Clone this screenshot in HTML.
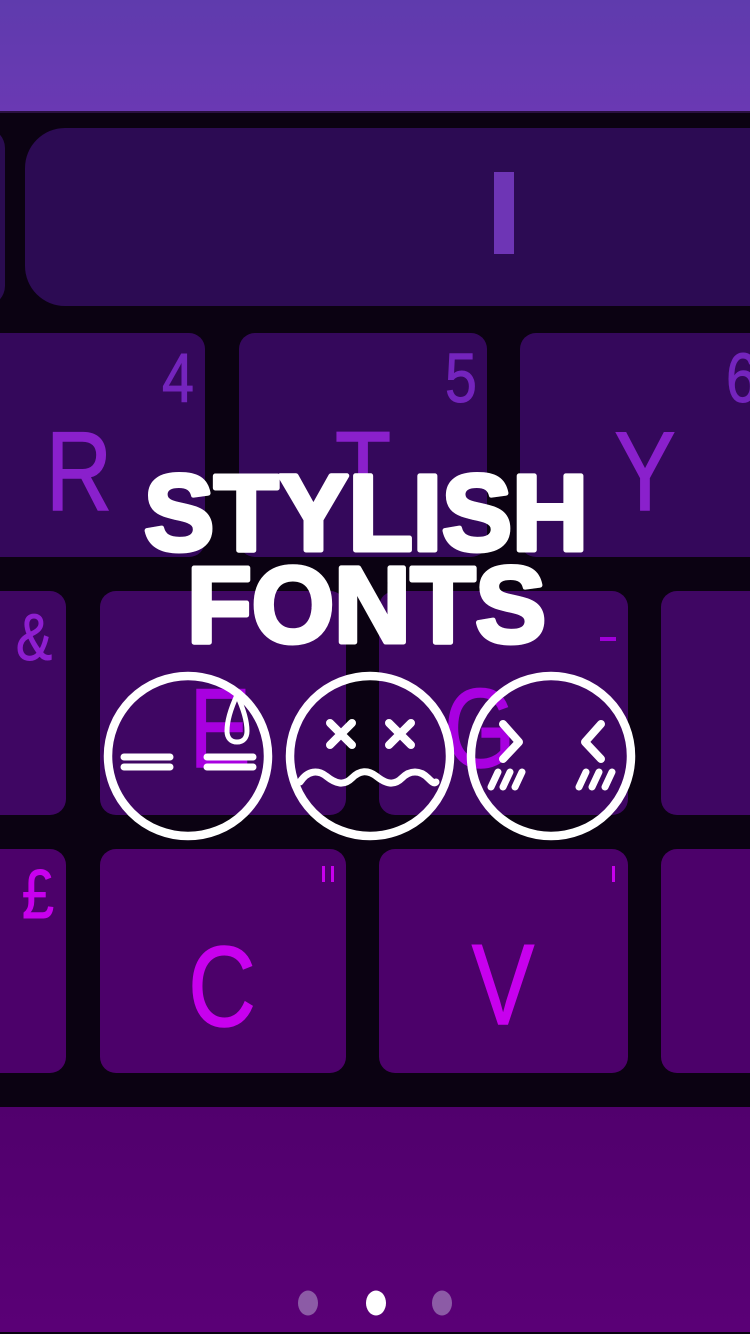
<!DOCTYPE html>
<html><head><meta charset="utf-8"><style>
html,body{margin:0;padding:0;background:#0b0212;width:750px;height:1334px;overflow:hidden}
svg{display:block}
</style></head><body>
<svg width="750" height="1334" viewBox="0 0 750 1334" xmlns="http://www.w3.org/2000/svg" font-family="Liberation Sans, sans-serif">
<defs>
<linearGradient id="top" x1="0" y1="0" x2="0" y2="1"><stop offset="0" stop-color="#5f3bad"/><stop offset="1" stop-color="#6a39b3"/></linearGradient>
<linearGradient id="bot" x1="0" y1="0" x2="0" y2="1"><stop offset="0" stop-color="#51006d"/><stop offset="1" stop-color="#5a0076"/></linearGradient>
</defs>
<rect width="750" height="1334" fill="#0b0212"/>
<rect width="750" height="111" fill="url(#top)"/>
<rect x="0" y="111" width="750" height="2" fill="#2a1040"/>
<!-- big key -->
<rect x="-40" y="128" width="45" height="178" rx="20" fill="#2a0c50"/>
<rect x="25" y="128" width="800" height="178" rx="40" fill="#2c0b53"/>
<rect x="494" y="172" width="20" height="82" fill="#6e35b5"/>
<!-- row 2 -->
<g fill="#34085b">
<rect x="-40" y="333" width="245" height="224" rx="16"/>
<rect x="239" y="333" width="248" height="224" rx="16"/>
<rect x="520" y="333" width="260" height="224" rx="16"/>
</g>
<g fill="#8a20cc" stroke="#8a20cc" stroke-width="1.5">
<text transform="translate(79,510) scale(0.82,1)" text-anchor="middle" font-size="112">R</text>
<text transform="translate(363,510) scale(0.82,1)" text-anchor="middle" font-size="112">T</text>
<text transform="translate(645,510) scale(0.82,1)" text-anchor="middle" font-size="112">Y</text>
</g>
<g fill="#7424bd" stroke="#7424bd" stroke-width="1">
<text transform="translate(178,402) scale(0.82,1)" text-anchor="middle" font-size="70">4</text>
<text transform="translate(461,402) scale(0.82,1)" text-anchor="middle" font-size="70">5</text>
<text transform="translate(742,402) scale(0.82,1)" text-anchor="middle" font-size="70">6</text>
</g>
<!-- row 3 -->
<g fill="#3f0663">
<rect x="-40" y="591" width="106" height="224" rx="16"/>
<rect x="100" y="591" width="246" height="224" rx="16"/>
<rect x="379" y="591" width="249" height="224" rx="16"/>
<rect x="661" y="591" width="120" height="224" rx="16"/>
</g>
<text transform="translate(34,660) scale(0.82,1)" text-anchor="middle" font-size="66" fill="#8e1ed0" stroke="#8e1ed0" stroke-width="1">&amp;</text>
<text transform="translate(320,640) scale(0.82,1)" text-anchor="middle" font-size="60" fill="#9a14d6">*</text>
<rect x="600" y="637" width="16" height="4" fill="#a000d8"/>
<g fill="#a800e0" stroke="#a800e0" stroke-width="1.5">
<text transform="translate(220,767) scale(0.82,1)" text-anchor="middle" font-size="112">E</text>
<text transform="translate(480,767) scale(0.82,1)" text-anchor="middle" font-size="112">G</text>
</g>
<!-- row 4 -->
<g fill="#4c016a">
<rect x="-40" y="849" width="106" height="224" rx="16"/>
<rect x="100" y="849" width="246" height="224" rx="16"/>
<rect x="379" y="849" width="249" height="224" rx="16"/>
<rect x="661" y="849" width="120" height="224" rx="16"/>
</g>
<g fill="#c800ee">
<text transform="translate(38,918) scale(0.82,1)" text-anchor="middle" font-size="70" stroke="#c800ee" stroke-width="1">£</text>
<text transform="translate(222,1026) scale(0.82,1)" text-anchor="middle" font-size="114" stroke="#c800ee" stroke-width="1.5">C</text>
<text transform="translate(503,1024) scale(0.82,1)" text-anchor="middle" font-size="114" stroke="#c800ee" stroke-width="1.5">V</text>
<rect x="322" y="866" width="3" height="16"/><rect x="331" y="866" width="3" height="16"/>
<rect x="612" y="866" width="3" height="16"/>
</g>
<!-- bottom -->
<rect x="0" y="1107" width="750" height="225" fill="url(#bot)"/>
<ellipse cx="308" cy="1303" rx="10" ry="12.5" fill="#8c5ba6"/>
<ellipse cx="376" cy="1303" rx="10" ry="12.5" fill="#ffffff"/>
<ellipse cx="442" cy="1303" rx="10" ry="12.5" fill="#8c5ba6"/>
<!-- title -->
<g fill="#fff" stroke="#fff" stroke-width="5" stroke-linejoin="round" font-weight="bold" font-size="108">
<text x="144" y="550" textLength="444" lengthAdjust="spacingAndGlyphs">STYLISH</text>
<text x="187" y="642" textLength="359" lengthAdjust="spacingAndGlyphs">FONTS</text>
</g>
<!-- faces -->
<g fill="none" stroke="#fff" stroke-width="8.5" stroke-linecap="round" stroke-linejoin="round">
<circle cx="188" cy="756" r="80"/>
<circle cx="370" cy="756" r="80"/>
<circle cx="551" cy="756" r="80"/>
<!-- face1 -->
<path d="M124 757H170M124 767H170M207 757H253M207 767H253" stroke-width="7"/>
<path d="M237 695C231 708 227 720 227 731C227 738 231 742 237 742C243 742 247 738 247 731C247 720 243 708 237 695Z" stroke-width="5"/>
<!-- face2 -->
<path d="M330 723L352 745M352 723L330 745M389 723L411 745M411 723L389 745" stroke-width="8"/>
<path d="M300 782C308 770 318 770 326 776C336 784 344 786 352 778C360 770 368 770 376 776C386 784 394 786 402 778C410 770 420 770 428 778C432 782 434 784 436 782" stroke-width="7"/>
<!-- face3 -->
<path d="M503 724L519 742L503 759M601 724L585 742L601 759" stroke-width="8"/>
<path d="M491 787L498 772M503 787L510 772M515 787L522 772M579 787L586 772M592 787L599 772M605 787L612 772" stroke-width="7"/>
</g>
</svg>
</body></html>
